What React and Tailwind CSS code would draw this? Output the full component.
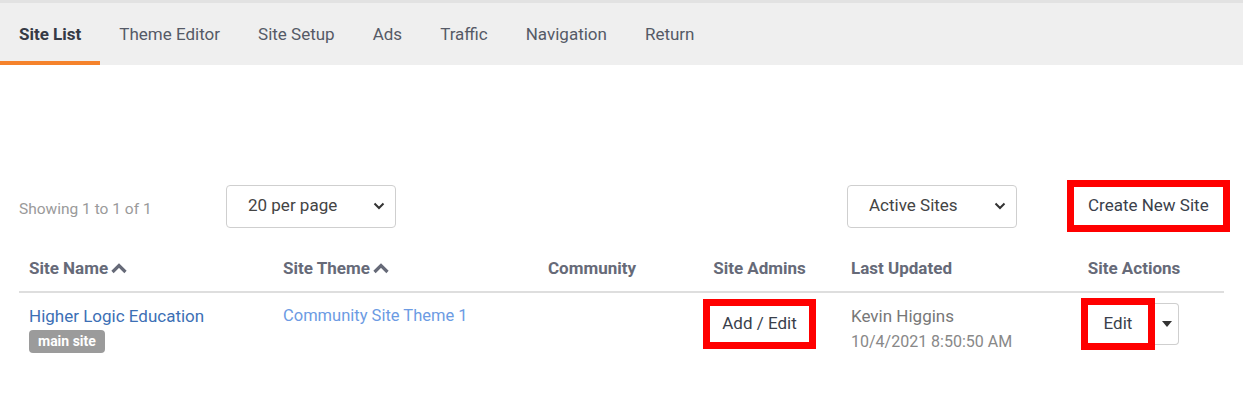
import React from 'react';

const tabs = ['Site List', 'Theme Editor', 'Site Setup', 'Ads', 'Traffic', 'Navigation', 'Return'];

function Chevron() {
  return (
    <svg width="12" height="8" viewBox="0 0 12 8" className="text-[#333]">
      <path d="M1.5 1.5 L6 6 L10.5 1.5" fill="none" stroke="currentColor" strokeWidth="2" />
    </svg>
  );
}

function FakeSelect({ label, className = '' }) {
  return (
    <div
      className={`flex h-[43px] w-[170px] shrink-0 items-center justify-between rounded-[4px] border border-[#cfcfcf] bg-white pl-[21px] pr-[10px] text-[17px] whitespace-nowrap text-[#444] ${className}`}
    >
      <span>{label}</span>
      <Chevron />
    </div>
  );
}

function SortUp() {
  return (
    <svg width="16" height="12" viewBox="0 0 16 12">
      <path d="M1.5 10 L8 3.5 L14.5 10" fill="none" stroke="#666a78" strokeWidth="3.2" />
    </svg>
  );
}

export default function App() {
  return (
    <div className="min-h-[394px] bg-white font-['Roboto','Liberation_Sans',sans-serif]">
      <div className="h-[3px] bg-[#e2e2e2]" />
      <nav className="flex h-[62px] bg-[#efefef]">
        {tabs.map((tab, index) => (
          <div
            key={tab}
            className={`flex h-full items-center border-b-4 px-[19px] pt-[6px] text-[17px] ${
              index === 0 ? 'border-[#f5822b] font-bold text-[#353a45]' : 'border-transparent text-[#555a66]'
            }`}
          >
            {tab}
          </div>
        ))}
      </nav>

      <div className="px-[19px]">
        <div className="mt-[115px] flex h-[52px] items-center">
          <span className="w-[207px] shrink-0 pt-[8px] text-[15.5px] whitespace-nowrap text-[#9a9a9a]">Showing 1 to 1 of 1</span>
          <FakeSelect label="20 per page" />
          <FakeSelect label="Active Sites" className="ml-[451px]" />
          <button className="ml-[50px] flex h-[52px] shrink-0 items-center border-[7px] border-[#ff0000] bg-white px-[14px] text-[17px] whitespace-nowrap text-[#3a3f4b]">
            Create New Site
          </button>
        </div>

        <div className="grid grid-cols-[254px_265px_150px_143px_213px_1fr] text-[17px]">
          <div className="col-span-6 grid grid-cols-subgrid h-[61px] items-end border-b-2 border-[#dedede] pb-[10px] font-bold text-[#666a78]">
            <div className="flex items-center gap-[3px] pl-[10px]">
              Site Name
              <SortUp />
            </div>
            <div className="flex items-center gap-[3px] pl-[10px]">
              Site Theme
              <SortUp />
            </div>
            <div className="pl-[10px]">Community</div>
            <div className="text-center">Site Admins</div>
            <div className="pl-[20px]">Last Updated</div>
            <div className="text-center">Site Actions</div>
          </div>

          <div className="col-span-6 grid grid-cols-subgrid h-[70px] items-start">
            <div className="pl-[10px] pt-[11px]">
              <div className="leading-[24px] text-[#3c6fb5]">Higher Logic Education</div>
              <span className="mt-[2px] inline-block h-[23px] rounded-[4px] bg-[#9b9b9b] px-[9px] text-[14px] font-bold leading-[23px] text-white">
                main site
              </span>
            </div>
            <div className="pl-[10px] pt-[11px] text-[16.5px] leading-[24px] text-[#6c9be3]">Community Site Theme 1</div>
            <div />
            <div className="flex justify-center pt-[6px]">
              <button className="h-[50px] border-[7px] border-[#ff0000] bg-white px-[12px] text-[#3a3f4b]">Add / Edit</button>
            </div>
            <div className="pl-[20px] pt-[11px] leading-[25px]">
              <div className="text-[#777]">Kevin Higgins</div>
              <div className="text-[16px] text-[#888]">10/4/2021 8:50:50 AM</div>
            </div>
            <div className="flex justify-center pr-[8px] pt-[5px]">
              <div className="flex items-center">
                <button className="z-10 h-[52px] border-[7px] border-[#ff0000] bg-white px-[16px] text-[#3a3f4b]">Edit</button>
                <div className="flex h-[42px] w-[24px] items-center justify-center rounded-r-[4px] border border-l-0 border-[#cfcfcf]">
                  <svg width="10" height="6" viewBox="0 0 10 6"><path d="M0 0 L10 0 L5 6 Z" fill="#333" /></svg>
                </div>
              </div>
            </div>
          </div>
        </div>
      </div>
    </div>
  );
}
